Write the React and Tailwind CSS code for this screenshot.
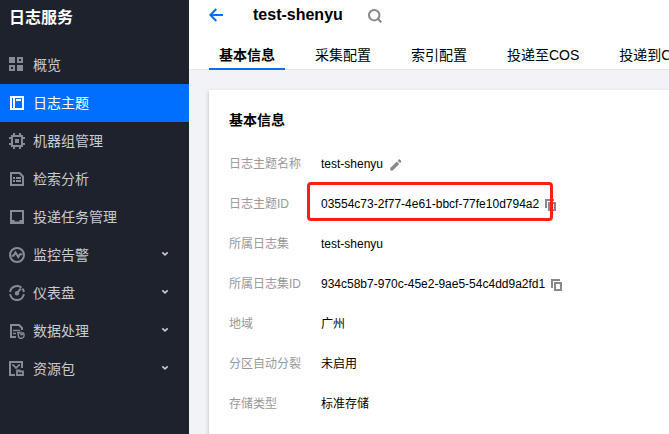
const menu = [
  { label: '概览', icon: 'overview' },
  { label: '日志主题', icon: 'topic', active: true },
  { label: '机器组管理', icon: 'machine' },
  { label: '检索分析', icon: 'search' },
  { label: '投递任务管理', icon: 'ship' },
  { label: '监控告警', icon: 'monitor', expandable: true },
  { label: '仪表盘', icon: 'dashboard', expandable: true },
  { label: '数据处理', icon: 'process', expandable: true },
  { label: '资源包', icon: 'resource', expandable: true },
];

const tabs = ['基本信息', '采集配置', '索引配置', '投递至COS', '投递到Ckafka'];

const rows = [
  { label: '日志主题名称', value: 'test-shenyu', action: 'edit' },
  { label: '日志主题ID', value: '03554c73-2f77-4e61-bbcf-77fe10d794a2', action: 'copy', marked: true },
  { label: '所属日志集', value: 'test-shenyu' },
  { label: '所属日志集ID', value: '934c58b7-970c-45e2-9ae5-54c4dd9a2fd1', action: 'copy' },
  { label: '地域', value: '广州' },
  { label: '分区自动分裂', value: '未启用' },
  { label: '存储类型', value: '标准存储' },
];

const glyphs = {
  overview: (
    <path fill="currentColor" fillRule="evenodd" d="M0 0h6v6H0zM8 0h6v6H8zM10 2v2h2V2zM0 8h6v6H0zM2 10v2h2v-2zM8 8h6v6H8z" />
  ),
  topic: (
    <path fill="currentColor" fillRule="evenodd" d="M1 1h14v14H1zM3 3v10h1V3zM6 3v10h7V3zM7 4h5v2H7z" />
  ),
  machine: (
    <path
      fill="currentColor"
      fillRule="evenodd"
      d="M4 0h2v2h4V0h2v2h2v2h2v2h-2v4h2v2h-2v2h-2v2h-2v-2H6v2H4v-2H2v-2H0v-2h2V6H0V4h2V2h2zM4 4v8h8V4zM6 6h4v4H6z"
    />
  ),
  search: (
    <path
      fill="currentColor"
      fillRule="evenodd"
      d="M1 1h10l4 4v10H1zM3 3v10h10V6l-3-3zM4 6h2v2H4zM7 6h5v2H7zM4 9h2v2H4zM7 9h5v2H7z"
    />
  ),
  ship: <path fill="currentColor" fillRule="evenodd" d="M1 1h14v14H1zM3 3v8h2.5v1.5h5V11H13V3z" />,
  monitor: (
    <g fill="none" stroke="currentColor">
      <circle cx="8" cy="8" r="7" strokeWidth="2" />
      <path d="M2.5 8.8h2L6.5 5.5 9.3 10 11 7.3h2.5" strokeWidth="2" />
    </g>
  ),
  dashboard: (
    <g fill="none" stroke="currentColor" strokeWidth="2">
      <path d="M1.1 7A7 7 0 0 1 12.4 2.6M13.4 3.6A7 7 0 0 1 14.9 7M1.1 9.2a7 7 0 0 0 13.8 0" />
      <path d="m8 8 3.8-4.4" />
      <circle cx="8" cy="8.3" r="1.2" fill="currentColor" />
    </g>
  ),
  process: (
    <g fill="none" stroke="currentColor">
      <path d="M7 14H2V2h8l3 3v2" strokeWidth="2" />
      <path d="M4 7.5h7M4 10.5h3" strokeWidth="1.6" />
      <path d="M9.3 9v4a2.9 2.9 0 0 0 5.7-1.2 2 2 0 0 0-2-2M8 9.7h3M11.9 8.5v3h2" strokeWidth="1.4" />
    </g>
  ),
  resource: (
    <g fill="none" stroke="currentColor">
      <path d="M6 14H1V1h12v6" strokeWidth="2" />
      <path d="M3.2 4.2h1.2L7 7l3-2.8h1" strokeWidth="1.7" />
      <path d="M8 9v5h6v-3.5h-3.5V9.5H7.5" strokeWidth="1.8" />
    </g>
  ),
};

function MenuItem({ item }) {
  return (
    <a
      className={
        item.active
          ? 'flex h-[38px] items-center bg-[#006eff] pl-[9px] pr-5 text-white'
          : 'flex h-[38px] items-center pl-[9px] pr-5 text-[#c8cbd0]'
      }
    >
      <svg viewBox="0 0 16 16" className={item.active ? 'size-4 shrink-0' : 'size-4 shrink-0 text-[#848d96]'}>
        {glyphs[item.icon]}
      </svg>
      <span className="ml-2 flex-1 leading-5">{item.label}</span>
      {item.expandable && (
        <svg viewBox="0 0 8 6" className="mb-0.5 h-1.5 w-2" fill="none" stroke="currentColor" strokeWidth="1.6">
          <path d="m1.3 1.3 2.7 2.6 2.7-2.6" />
        </svg>
      )}
    </a>
  );
}

function CopyIcon() {
  return (
    <svg viewBox="0 0 11 12" className="ml-1.5 mt-0.5 h-3 w-[11px]" fill="#888">
      <path fillRule="evenodd" d="M0 0h9v2H2v7H0zM3 3h8v9H3zM5 5v5h4V5z" />
    </svg>
  );
}

function EditIcon() {
  return (
    <svg viewBox="0 0 12 12" className="ml-[7px] mt-px size-3" fill="#888">
      <path d="M0.3 9 6.8 2.5l2.4 2.4L2.7 11.4H.3zM7.6 1.7 8.7.6q.6-.5 1.2 0l1.2 1.2q.5.6 0 1.2L10 4.1z" />
    </svg>
  );
}

export default function App() {
  return (
    <div className="flex h-[434px] w-[669px] overflow-hidden bg-[#f2f3f7] font-['Liberation_Sans','Noto_Sans_CJK_SC',sans-serif] text-black">
      <aside className="w-[189px] shrink-0 bg-[#1e222d] text-sm">
        <h1 className="flex h-[46px] items-start pl-[9px] pt-1.5 text-base font-bold leading-6 text-white">日志服务</h1>
        <nav>
          {menu.map((item) => (
            <MenuItem key={item.label} item={item} />
          ))}
        </nav>
      </aside>

      <main className="flex w-[480px] shrink-0 flex-col overflow-hidden">
        <header className="h-[70px] shrink-0 border-b border-[#e5e7ec] bg-white">
          <div className="flex h-[30px] items-center pl-5">
            <svg viewBox="0 0 14 14" className="h-3.5 w-3.5" fill="none" stroke="#006eff" strokeWidth="2">
              <path d="M14 7H1.5M7.3 1 1.4 7l5.9 6" />
            </svg>
            <h2 className="ml-[30px] text-base font-bold leading-6">test-shenyu</h2>
            <svg viewBox="0 0 14 14" className="ml-[25px] mt-0.5 h-3.5 w-3.5" fill="none" stroke="#888" strokeWidth="2">
              <circle cx="6.2" cy="6.2" r="5.2" />
              <path d="m9.3 9.3 4 4" />
            </svg>
          </div>
          <div className="flex h-10 gap-5 pl-5 text-sm">
            {tabs.map((tab, i) => (
              <div
                key={tab}
                className={
                  i === 0
                    ? 'h-10 shrink-0 whitespace-nowrap border-b-2 border-[#006eff] px-2.5 pt-[15px] font-bold leading-5'
                    : 'h-10 shrink-0 whitespace-nowrap px-2.5 pt-[15px] leading-5'
                }
              >
                {tab}
              </div>
            ))}
          </div>
        </header>

        <section className="ml-5 mt-5 h-[400px] w-[500px] shrink-0 bg-white pl-5 pt-5 shadow-[0_2px_4px_0_rgba(54,58,80,0.32)]">
          <h3 className="text-sm font-bold leading-5">基本信息</h3>
          <dl className="mt-3.5 text-xs">
            {rows.map((row) => (
              <div key={row.label} className="flex h-10 items-center">
                <dt className="w-[92px] text-[#999]">{row.label}</dt>
                <dd className="relative flex items-center">
                  <span>{row.value}</span>
                  {row.action === 'copy' && <CopyIcon />}
                  {row.action === 'edit' && <EditIcon />}
                  {row.marked && (
                    <span className="absolute -left-3.5 -top-3.5 h-[39px] w-[246px] rounded-[4px] border-[3px] border-[#ff1f14]" />
                  )}
                </dd>
              </div>
            ))}
          </dl>
        </section>
      </main>
    </div>
  );
}
